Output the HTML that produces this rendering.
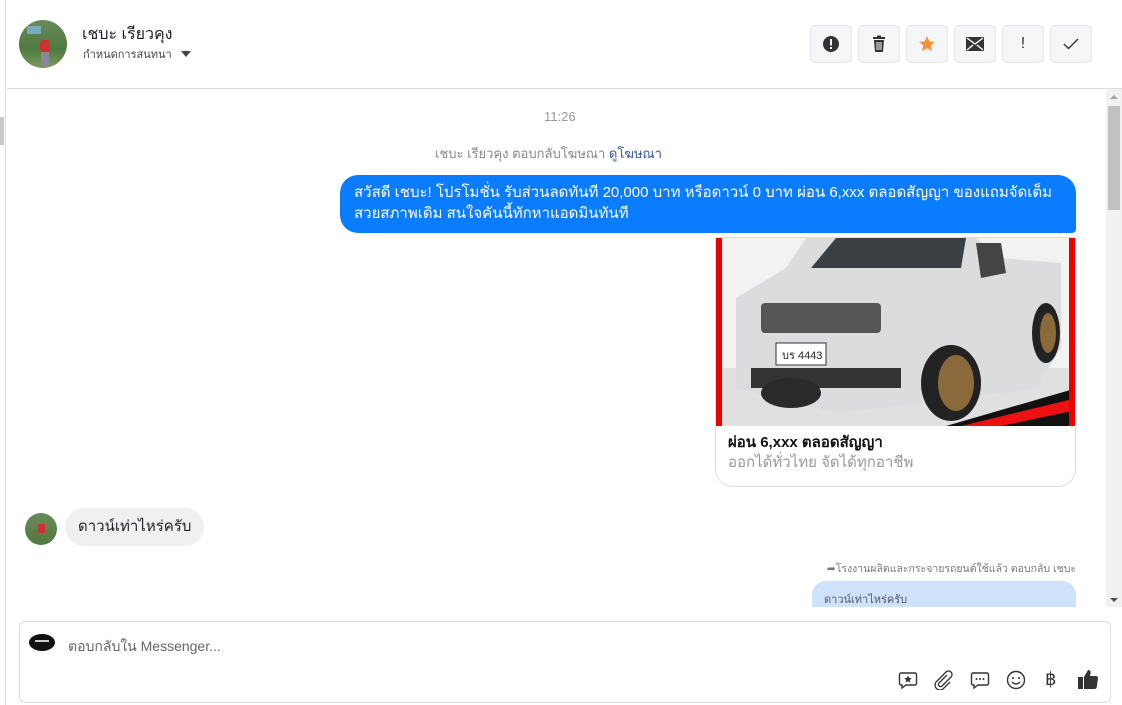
<!DOCTYPE html>
<html><head><meta charset="utf-8"><style>
*{margin:0;padding:0;box-sizing:border-box}
body{width:1122px;height:705px;overflow:hidden;background:#fff;font-family:"Liberation Sans","Noto Sans CJK SC",sans-serif;position:relative;color:#1c1e21}
.abs{position:absolute}
.btn{position:absolute;top:25px;width:42px;height:38px;border:1px solid #e4e6eb;border-radius:5px;background:#f5f6f7;display:flex;align-items:center;justify-content:center}
</style></head><body>
<div class="abs" style="left:0;top:0;width:6px;height:705px;background:#fff;border-right:1px solid #ddd"></div>
<div class="abs" style="left:0;top:117px;width:4px;height:28px;background:#c8c8c8"></div>
<!-- header -->
<div class="abs" style="left:19px;top:20px;width:48px;height:48px;border-radius:50%;overflow:hidden;background:linear-gradient(#6a8a5a,#4f7a3f 60%,#7a9a5a)">
<div class="abs" style="left:8px;top:6px;width:14px;height:8px;background:#7ab"></div>
<div class="abs" style="left:21px;top:20px;width:10px;height:12px;background:#c33;border-radius:3px"></div>
<div class="abs" style="left:22px;top:32px;width:8px;height:14px;background:#889"></div>
</div>
<div class="abs" style="left:82px;top:22px;font-size:16px;color:#1c1e21">เชบะ เรียวคุง</div>
<div class="abs" style="left:83px;top:45px;font-size:11px;color:#444">กำหนดการสนทนา <span style="display:inline-block;width:0;height:0;border-left:5px solid transparent;border-right:5px solid transparent;border-top:6px solid #444;margin-left:6px;vertical-align:1px"></span></div>
<div class="btn" style="left:810px"><svg width="18" height="18" viewBox="0 0 18 18"><circle cx="9" cy="9" r="8" fill="#333"/><rect x="8" y="4" width="2" height="6.5" fill="#fff"/><rect x="8" y="12" width="2" height="2" fill="#fff"/></svg></div>
<div class="btn" style="left:858px"><svg width="16" height="18" viewBox="0 0 16 18"><rect x="2" y="2" width="12" height="2" fill="#333"/><rect x="6" y="0.5" width="4" height="2" fill="#333"/><path d="M3 5h10l-1 12H4z" fill="#333"/><path d="M6 7v8M8 7v8M10 7v8" stroke="#fff" stroke-width="1"/></svg></div>
<div class="btn" style="left:906px"><svg width="18" height="18" viewBox="0 0 24 24"><path d="M12 1.5l3.2 7 7.3.7-5.5 5 1.6 7.3L12 17.7 5.4 21.5 7 14.2 1.5 9.2l7.3-.7z" fill="#f7923a"/></svg></div>
<div class="btn" style="left:954px"><svg width="18" height="14" viewBox="0 0 18 14"><rect width="18" height="14" fill="#333"/><path d="M1 1l8 6 8-6M1 13l6-5M17 13l-6-5" stroke="#fff" stroke-width="1.4" fill="none"/></svg></div>
<div class="btn" style="left:1002px;font-size:16px;color:#333">!</div>
<div class="btn" style="left:1050px"><svg width="16" height="12" viewBox="0 0 16 12"><path d="M1 6l4.5 4.5L15 1" stroke="#333" stroke-width="1.4" fill="none"/></svg></div>
<div class="abs" style="left:7px;top:88px;width:1115px;height:1px;background:#ddd"></div>
<!-- scrollbar -->
<div class="abs" style="left:1106px;top:89px;width:16px;height:518px;background:#f1f1f1"></div>
<div class="abs" style="left:1108px;top:106px;width:12px;height:104px;background:#c1c1c1"></div>
<div class="abs" style="left:1110px;top:95px;border-left:4px solid transparent;border-right:4px solid transparent;border-bottom:4px solid #a3a3a3"></div>
<div class="abs" style="left:1110px;top:598px;border-left:4px solid transparent;border-right:4px solid transparent;border-top:4px solid #505050"></div>
<!-- messages -->
<div class="abs" style="left:544px;top:109px;font-size:13px;color:#999">11:26</div>
<div class="abs" style="left:435px;top:143px;font-size:13px;color:#888">เชบะ เรียวคุง ตอบกลับโฆษณา <span style="color:#385898">ดูโฆษณา</span></div>
<div class="abs" style="left:340px;top:175px;width:736px;height:58px;background:#0a7cff;border-radius:18px 18px 4px 18px;color:#fff;font-size:15px;line-height:21px;padding:7px 14px">สวัสดี เชบะ! โปรโมชั่น รับส่วนลดทันที 20,000 บาท หรือดาวน์ 0 บาท ผ่อน 6,xxx ตลอดสัญญา ของแถมจัดเต็ม สวยสภาพเดิม สนใจคันนี้ทักหาแอดมินทันที</div>
<div class="abs" style="left:715px;top:237px;width:361px;height:250px;border:1px solid #ddd;border-radius:0 0 18px 18px;overflow:hidden">
<svg class="abs" style="left:0;top:0" width="361" height="188" viewBox="0 0 361 188">
<rect width="361" height="188" fill="#f2f2f2"/>
<rect x="0" y="130" width="361" height="58" fill="#e0e0e0"/>
<path d="M20 60 L70 30 L90 0 L260 0 L285 20 L345 25 L345 110 L320 150 L250 160 L120 175 L20 150 Z" fill="#dadcde"/>
<path d="M95 30 L120 0 L250 0 L245 30 Z" fill="#3a3f44"/>
<path d="M260 5 L285 5 L290 35 L265 40 Z" fill="#444"/>
<rect x="45" y="65" width="120" height="30" fill="#555" rx="4"/>
<rect x="60" y="105" width="50" height="22" fill="#fff" stroke="#333"/>
<text x="66" y="121" font-size="11" fill="#222" font-family="Liberation Sans">บร 4443</text>
<rect x="35" y="130" width="150" height="20" fill="#333"/>
<ellipse cx="235" cy="145" rx="30" ry="38" fill="#222"/><ellipse cx="240" cy="145" rx="18" ry="28" fill="#8a6a3a"/>
<ellipse cx="330" cy="95" rx="14" ry="30" fill="#222"/><ellipse cx="332" cy="95" rx="8" ry="20" fill="#8a6a3a"/>
<ellipse cx="75" cy="155" rx="30" ry="15" fill="#2a2a2a"/>
<path d="M230 188 L361 150 L361 188 Z" fill="#111"/>
<path d="M245 188 L361 160 L361 172 L285 188 Z" fill="#e11"/>
<rect x="0" y="0" width="6" height="188" fill="#e00"/>
<rect x="353" y="0" width="8" height="188" fill="#e00"/>
</svg>
<div class="abs" style="left:12px;top:192px;font-size:15px;font-weight:bold;color:#111">ผ่อน 6,xxx ตลอดสัญญา</div>
<div class="abs" style="left:12px;top:212px;font-size:15px;color:#999">ออกได้ทั่วไทย จัดได้ทุกอาชีพ</div>
</div>
<div class="abs" style="left:25px;top:513px;width:32px;height:32px;border-radius:50%;background:linear-gradient(#6a8a5a,#4f7a3f)"><div class="abs" style="left:13px;top:11px;width:7px;height:9px;background:#c33"></div></div>
<div class="abs" style="left:65px;top:508px;height:38px;padding:0 13px;background:#f0f0f0;border-radius:19px;font-size:15px;line-height:38px">ดาวน์เท่าไหร่ครับ</div>
<div class="abs" style="right:46px;top:560px;font-size:10.5px;color:#777;white-space:nowrap">➦โรงงานผลิตและกระจายรถยนต์ใช้แล้ว ตอบกลับ เชบะ</div>
<div class="abs" style="left:812px;top:581px;width:264px;height:26px;background:#cfe2fb;border-radius:14px 14px 0 0;font-size:11px;color:#556;padding:9px 12px">ดาวน์เท่าไหร่ครับ</div>
<!-- composer -->
<div class="abs" style="left:19px;top:621px;width:1092px;height:82px;border:1px solid #ddd;border-radius:6px"></div>
<div class="abs" style="left:29px;top:634px;width:26px;height:17px;border-radius:50%;background:#111"><div class="abs" style="left:6px;top:6px;width:14px;height:2px;background:#ccc"></div></div>
<div class="abs" style="left:68px;top:636px;font-size:14px;color:#666">ตอบกลับใน Messenger...</div>
<svg class="abs" style="left:898px;top:670px" width="20" height="20" viewBox="0 0 20 20"><path d="M3 3h14a1.5 1.5 0 011.5 1.5v9A1.5 1.5 0 0117 15H8l-4 3v-3H3a1.5 1.5 0 01-1.5-1.5v-9A1.5 1.5 0 013 3z" fill="none" stroke="#333" stroke-width="1.4"/><path d="M10 5.5l1.2 2.4 2.6.3-2 1.8.6 2.6L10 11.3l-2.4 1.3.6-2.6-2-1.8 2.6-.3z" fill="#333"/></svg>
<svg class="abs" style="left:933px;top:670px" width="20" height="20" viewBox="0 0 20 20"><path d="M14 5l-8 8a2 2 0 003 3l9-9a3.5 3.5 0 00-5-5L3 12a5 5 0 007 7l7-7" fill="none" stroke="#333" stroke-width="1.3"/></svg>
<svg class="abs" style="left:970px;top:670px" width="20" height="20" viewBox="0 0 20 20"><path d="M3 3h14a1.5 1.5 0 011.5 1.5v9A1.5 1.5 0 0117 15H8l-4 3v-3H3a1.5 1.5 0 01-1.5-1.5v-9A1.5 1.5 0 013 3z" fill="none" stroke="#333" stroke-width="1.4"/><circle cx="6.5" cy="9" r="1" fill="#333"/><circle cx="10" cy="9" r="1" fill="#333"/><circle cx="13.5" cy="9" r="1" fill="#333"/></svg>
<svg class="abs" style="left:1006px;top:670px" width="20" height="20" viewBox="0 0 20 20"><circle cx="10" cy="10" r="8.5" fill="none" stroke="#333" stroke-width="1.4"/><circle cx="7" cy="8" r="1" fill="#333"/><circle cx="13" cy="8" r="1" fill="#333"/><path d="M6 12q4 4 8 0" fill="none" stroke="#333" stroke-width="1.3"/></svg>
<div class="abs" style="left:1045px;top:669px;font-size:18px;color:#333">฿</div>
<svg class="abs" style="left:1077px;top:668px" width="22" height="22" viewBox="0 0 22 22"><rect x="1" y="9" width="5" height="12" fill="#333"/><path d="M7 9l4-7c2 0 3 1 2.5 3.5L13 8h6a2 2 0 012 2.2l-1.2 8.5A2.5 2.5 0 0117.3 21H7z" fill="#333"/></svg>
</body></html>
